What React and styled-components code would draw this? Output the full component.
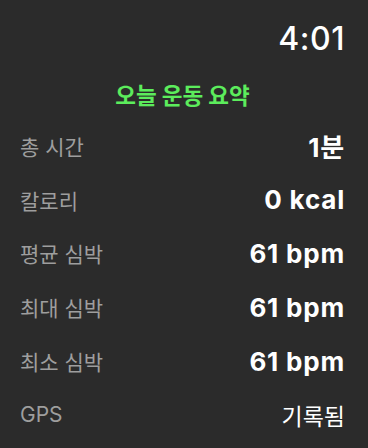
import React from 'react';
import styled, { createGlobalStyle } from 'styled-components';

const GlobalStyle = createGlobalStyle`
  html, body {
    margin: 0;
    padding: 0;
    background: #2b2b2b;
  }
  body {
    font-family: Inter, "Noto Sans CJK KR", sans-serif;
  }
`;

const Screen = styled.div`
  width: 368px;
  height: 448px;
  box-sizing: border-box;
  padding: 20px 23px 0 20px;
  background: #2b2b2b;
  overflow: hidden;
`;

const Clock = styled.div`
  text-align: right;
  color: #ffffff;
  font-size: 32px;
  font-weight: 500;
  line-height: 38px;
  letter-spacing: 0.5px;
`;

const Title = styled.h1`
  margin: 22px 0 0;
  text-align: center;
  color: #5cec5c;
  font-family: "Noto Sans CJK KR", sans-serif;
  font-size: 22.5px;
  font-weight: 600;
  line-height: 28px;
`;

const List = styled.div`
  margin-top: 11px;
  display: flex;
  flex-direction: column;
`;

const Row = styled.div`
  height: 53.8px;
  display: flex;
  align-items: center;
  justify-content: space-between;
`;

const Label = styled.span`
  color: #9e9e9e;
  font-size: 21px;
  font-weight: 400;
`;

const Value = styled.span`
  color: #ffffff;
  font-size: ${p => (p.$plain ? '23px' : '26px')};
  font-weight: ${p => (p.$plain ? 400 : 700)};
  letter-spacing: ${p => (p.$plain ? '0' : '0.8px')};
`;

const stats = [
  { label: '총 시간', value: '1분' },
  { label: '칼로리', value: '0 kcal' },
  { label: '평균 심박', value: '61 bpm' },
  { label: '최대 심박', value: '61 bpm' },
  { label: '최소 심박', value: '61 bpm' },
  { label: 'GPS', value: '기록됨', plain: true },
];

export default function App() {
  return (
    <>
      <GlobalStyle />
      <Screen>
        <Clock>4:01</Clock>
        <Title>오늘 운동 요약</Title>
        <List>
          {stats.map(s => (
            <Row key={s.label}>
              <Label>{s.label}</Label>
              <Value $plain={s.plain}>{s.value}</Value>
            </Row>
          ))}
        </List>
      </Screen>
    </>
  );
}
